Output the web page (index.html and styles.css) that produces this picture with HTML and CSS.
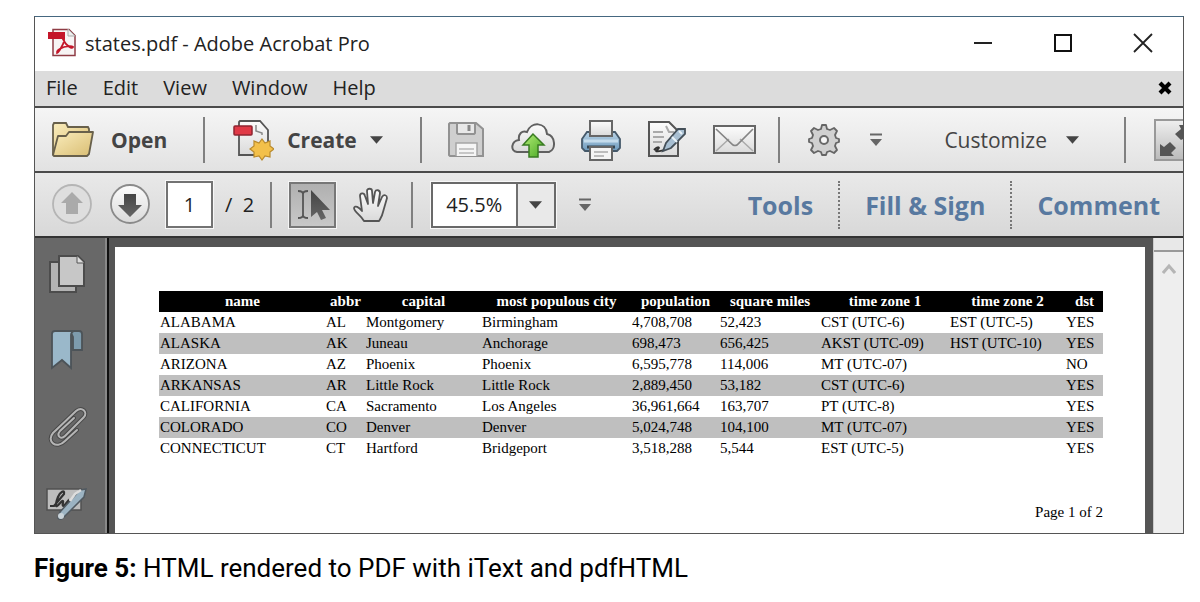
FILE: index.html
```html
<!DOCTYPE html>
<html lang="en">
<head>
<meta charset="utf-8">
<title>states.pdf - Adobe Acrobat Pro</title>
<link rel="stylesheet" href="styles.css">
</head>
<body>
<svg class="defs" aria-hidden="true">
  <defs>
    <linearGradient id="paper" x1="0" y1="0" x2="0" y2="1"><stop offset="0" stop-color="#fcfcfc"/><stop offset="1" stop-color="#dadada"/></linearGradient>
    <linearGradient id="gold" x1="0" y1="0" x2="1" y2="1"><stop offset="0" stop-color="#faedbd"/><stop offset="1" stop-color="#d9bd72"/></linearGradient>
    <linearGradient id="green" x1="0" y1="0" x2="1" y2="1"><stop offset="0" stop-color="#b5ee78"/><stop offset="1" stop-color="#48a823"/></linearGradient>
    <linearGradient id="blue" x1="0" y1="0" x2="0" y2="1"><stop offset="0" stop-color="#b9d3e6"/><stop offset="1" stop-color="#6d9abd"/></linearGradient>
    <linearGradient id="dark" x1="0" y1="0" x2="0" y2="1"><stop offset="0" stop-color="#444"/><stop offset="1" stop-color="#666"/></linearGradient>
  </defs>
</svg>
<figure class="figure">
  <div class="window">
    <header class="titlebar">
      <svg width="30" height="30" viewBox="0 0 30 30"><path d="M6 1.500h16l6 6v20H6z" fill="#f7f4f4" stroke="#8f3c45" stroke-width="1.500"/><path d="M21 1v7h7z" fill="#eee" stroke="#aaa"/><path d="M1 4h17v7H1z" fill="#c4162a"/><path d="M16 10c2 0 1 5-1 8-2 4-3 6-5 7-1-2 2-4 7-6 4-1 8-1 9 0-1 2-4 0-7-3-2-3-4-6-3-6z" fill="none" stroke="#c4162a" stroke-width="1.800"/></svg>
      <span class="title">states.pdf - Adobe Acrobat Pro</span>
      <div class="controls">
        <button aria-label="Minimize"><svg width="20" height="20" viewBox="0 0 20 20"><path d="M1 10h18" stroke="#222" stroke-width="2"/></svg></button>
        <button aria-label="Maximize"><svg width="20" height="20" viewBox="0 0 20 20"><path d="M2 2h16v16H2z" fill="none" stroke="#111" stroke-width="2"/></svg></button>
        <button aria-label="Close"><svg width="20" height="20" viewBox="0 0 20 20"><path d="M1 1l18 18M19 1L1 19" stroke="#222" stroke-width="1.800"/></svg></button>
      </div>
    </header>
    <nav class="menubar">
      <button>File</button><button>Edit</button><button>View</button><button>Window</button><button>Help</button>
      <button class="close-doc" aria-label="Close document"><svg width="14" height="14" viewBox="0 0 14 14"><path d="M2 2l10 10M12 2L2 12" stroke="#000" stroke-width="4.200"/></svg></button>
    </nav>
    <div class="toolbar main">
      <button class="open"><svg width="44" height="38" viewBox="0 0 44 38"><path d="M2 34V4l1-2h12l2 4h20l1 2v24H3z" fill="url(#gold)" stroke="#68604b" stroke-width="1.800"/><path d="M2 34L7 15h8l3-4h24l-4 22-2 2H3z" fill="url(#gold)" stroke="#68604b" stroke-width="1.800" stroke-linejoin="round"/></svg>Open</button>
      <span class="sep"></span>
      <button class="create"><svg width="41" height="42" viewBox="0 0 41 42"><path d="M6 3l1-1h20l8 9v25H6z" fill="url(#paper)" stroke="#555" stroke-width="1.800"/><path d="M23 6v6l6 2v2" fill="none" stroke="#888" stroke-width="1.500"/><rect x="1" y="7" width="18" height="9" rx="1" fill="#e03946" stroke="#8e2430" stroke-width="1.500"/><path d="M29 20l3 4 5-2v5l4 3-4 3v5l-5-1-3 4-3-4-5 1v-5l-4-3 4-3v-5l5 2z" fill="#f3c04a" stroke="#b98a2c" stroke-width="1.200"/></svg>Create<svg width="13" height="8" viewBox="0 0 14 8"><path d="M0 0h14L7 8z" fill="#444"/></svg></button>
      <span class="sep"></span>
      <div class="tools">
        <button aria-label="Save"><svg width="36" height="36" viewBox="0 0 36 36"><path d="M2 1h26l7 6v27H2l-1-1V2z" fill="#cfcfcf" stroke="#929292" stroke-width="2"/><path d="M9 2v9l1 1h16l1-1V2" fill="#e8e8e8" stroke="#929292" stroke-width="2"/><path d="M21 3v6" stroke="#888" stroke-width="3"/><path d="M8 34V21h21v13" fill="#f5f5f5" stroke="#a5a5a5" stroke-width="1.500"/><path d="M11 27h15M11 31h15" stroke="#c7c7c7" stroke-width="2"/></svg></button>
        <button aria-label="Share"><svg width="44" height="36" viewBox="0 0 44 36"><path d="M6 30C-1 29 0 19 8 18 7 12 11 8 16 10 20-1 35 0 36 12c9 2 9 16 2 18z" fill="url(#paper)" stroke="#606060" stroke-width="2"/><path d="M22 12L12 23h6v12h9V23h6z" fill="url(#green)" stroke="#397b22" stroke-width="1.500"/></svg></button>
        <button aria-label="Print"><svg width="40" height="42" viewBox="0 0 40 42"><path d="M6 13h28l5 7v9l-3 3H4l-3-3v-9z" fill="url(#blue)" stroke="#45596a" stroke-width="1.800"/><path d="M9 17V2h22v15z" fill="url(#paper)" stroke="#666" stroke-width="2"/><path d="M3 22h34" stroke="#c5dcec" stroke-width="3"/><path d="M6 28h28" stroke="#354653" stroke-width="3"/><path d="M9 28h22v13H9z" fill="#f5f5f5" stroke="#666" stroke-width="2"/><path d="M13 33h14M13 37h10" stroke="#aaa" stroke-width="1.500"/></svg></button>
        <button aria-label="Sign"><svg width="38" height="37" viewBox="0 0 38 37"><path d="M1 1h20l9 9v25H1z" fill="url(#paper)" stroke="#555" stroke-width="2"/><path d="M18 5l3 6h5M5 11h10M5 16h11M5 21h9" fill="none" stroke="#aaa" stroke-width="2"/><path d="M6 29c4-4 7-3 3 0s7 0 8 0" fill="none" stroke="#333" stroke-width="2"/><path d="M15 30l3-8L30 8h7v5L23 27z" fill="#a8bfd2" stroke="#444f58" stroke-width="1.800"/><path d="M24 16l5 5M31 10l3 3" stroke="#eaf3f9" stroke-width="2"/></svg></button>
        <button aria-label="Email"><svg width="43" height="29" viewBox="0 0 43 29"><path d="M1 1h41v27H1z" fill="url(#paper)" stroke="#666" stroke-width="2"/><path d="M3 26l13-12M40 26L27 14" stroke="#aaa" stroke-width="1.500"/><path d="M3 4l17 16q2 1 4 0L40 4" fill="none" stroke="#858585" stroke-width="1.700"/></svg></button>
      </div>
      <span class="sep"></span>
      <button class="gear" aria-label="Settings"><svg width="32" height="32" viewBox="0 0 32 32"><path d="M14 1h4l1 4 3 1 4-2 3 3-2 4 1 3 3 1v3l-3 1-1 3 2 4-3 3-4-2-3 1-1 3h-4l-1-3-3-1-4 2-3-3 2-4-1-3-3-1v-3l3-1 1-3-2-4 3-3 4 2 3-1z" fill="#d0d0d0" stroke="#656565" stroke-width="1.800" stroke-linejoin="round"/><circle cx="16" cy="16" r="4" fill="#f5f5f5" stroke="#686868" stroke-width="2"/></svg></button>
      <button aria-label="More tools"><svg width="14" height="14" viewBox="0 0 14 14"><path d="M1 1.500h12" stroke="#666" stroke-width="2"/><path d="M1 6h12l-6 7z" fill="#666"/></svg></button>
      <button class="customize push">Customize<svg width="13" height="8" viewBox="0 0 14 8"><path d="M0 0h14L7 8z" fill="#444"/></svg></button>
      <span class="sep"></span>
      <button class="expand" aria-label="Full screen"><svg width="27" height="38" viewBox="0 0 27 38"><path d="M4 35V23l4 3 6-5 6 6-5 5 3 3zM27 4h-4l2 4-6 5 6 6 2-1z" fill="#555"/></svg></button>
    </div>
    <div class="toolbar nav">
      <button aria-label="Previous page"><svg width="42" height="42" viewBox="0 0 42 42"><circle cx="21" cy="20" r="19" fill="#dedede" stroke="#b5b5b5" stroke-width="1.800"/><path d="M21 8l11 11h-5v11H15V19h-5z" fill="#aaa"/></svg></button>
      <button class="next" aria-label="Next page"><svg width="42" height="42" viewBox="0 0 42 42"><circle cx="21" cy="20" r="19" fill="url(#paper)" stroke="#8a8a8a" stroke-width="1.800"/><path d="M15 10h12v11h6L21 33 9 21h6z" fill="url(#dark)"/></svg></button>
      <input class="page-number" type="text" value="1" aria-label="Page number">
      <span class="total">/&nbsp; 2</span>
      <span class="sep"></span>
      <button class="selection" aria-label="Selection tool"><svg width="40" height="36" viewBox="0 0 40 36"><path d="M5 4q5 0 5 3 0-3 5-3M10 7v22M5 31q5 0 5-3 0 3 5 3" fill="none" stroke="#555" stroke-width="1.800"/><path d="M18 3v27l6-5 4 8 5-2-4-8h8z" fill="url(#dark)"/></svg></button>
      <button class="hand" aria-label="Hand tool"><svg width="36" height="36" viewBox="0 0 36 36"><path d="M11 34C8 28 1 25 1 21c1-3 5-1 8 3L7 9c0-3 4-4 5 0l3 8-1-13c0-3 5-3 5 0l1 12 2-11c1-3 5-2 5 1l-2 13 4-9c2-3 5-2 5 1l-4 14c-1 5-3 7-4 9z" fill="url(#paper)" stroke="#555" stroke-width="1.800" stroke-linejoin="round"/></svg></button>
      <span class="sep"></span>
      <div class="zoom">
        <select aria-label="Zoom level"><option>45.5%</option></select>
        <svg width="13" height="8" viewBox="0 0 14 8"><path d="M0 0h14L7 8z" fill="#444"/></svg>
      </div>
      <button aria-label="More view tools"><svg width="14" height="14" viewBox="0 0 14 14"><path d="M1 1.500h12" stroke="#666" stroke-width="2"/><path d="M1 6h12l-6 7z" fill="#666"/></svg></button>
      <div class="panels push"><button>Tools</button><button>Fill &amp; Sign</button><button>Comment</button></div>
    </div>
    <div class="workspace">
      <aside class="sidebar">
        <button aria-label="Page thumbnails"><svg width="38" height="40" viewBox="0 0 38 40"><path d="M2 8h26v30H2z" fill="#b3b3b3" stroke="#4c4c4c" stroke-width="2"/><path d="M11 2h19l6 6v24H11z" fill="#c7c7c7" stroke="#4c4c4c" stroke-width="2"/><path d="M29 2v7h7" fill="#ddd" stroke="#555"/></svg></button>
        <button aria-label="Bookmarks"><svg width="38" height="42" viewBox="0 0 38 42"><path d="M22 2h9q3 0 3 3v16h-9V8z" fill="#7d9bad" stroke="#4c5358" stroke-width="1.800"/><path d="M4 39V5q0-3 3-3h19q-3 1-3 4v33l-9-8z" fill="#9ab8ca" stroke="#4c5358" stroke-width="1.800"/></svg></button>
        <button aria-label="Attachments"><svg width="42" height="46" viewBox="0 0 42 46"><g fill="none" stroke-linecap="round"><path d="M31 24L19 35c-9 9-19 0-12-8L30 5c6-5 12 1 8 6L19 30c-4 4-9 0-5-5l14-13" stroke="#484848" stroke-width="4"/><path d="M31 24L19 35c-9 9-19 0-12-8L30 5c6-5 12 1 8 6L19 30c-4 4-9 0-5-5l14-13" stroke="#b5b5b5" stroke-width="2"/></g></svg></button>
        <button aria-label="Signatures"><svg width="42" height="34" viewBox="0 0 42 34"><path d="M1 2h34v21H1z" fill="#bdbdbd" stroke="#505050" stroke-width="1.500"/><path d="M4 19h4L18 7c1-5-4-2-6 3s-3 10-1 9 5-6 6-5-2 5 1 5l4-5 1 5" fill="none" stroke="#333" stroke-width="2.200"/><path d="M12 31l2-6L34 3l6-1-2 8-20 20q-4 4-6 1z" fill="#9cb3c2" stroke="#505960" stroke-width="1.500"/><path d="M24 14l5-7 6-4" fill="none" stroke="#ddd" stroke-width="2.500"/><circle cx="15" cy="29" r="3" fill="#c9d3d9"/></svg></button>
      </aside>
      <main class="page">
        <table>
          <colgroup><col class="c-name"><col class="c-abbr"><col class="c-capital"><col class="c-city"><col class="c-pop"><col class="c-miles"><col class="c-zone1"><col class="c-zone2"><col class="c-dst"></colgroup>
          <thead><tr><th>name</th><th>abbr</th><th>capital</th><th>most populous city</th><th>population</th><th>square miles</th><th>time zone 1</th><th>time zone 2</th><th>dst</th></tr></thead>
          <tbody>
            <tr><td>ALABAMA</td><td>AL</td><td>Montgomery</td><td>Birmingham</td><td>4,708,708</td><td>52,423</td><td>CST (UTC-6)</td><td>EST (UTC-5)</td><td>YES</td></tr>
            <tr><td>ALASKA</td><td>AK</td><td>Juneau</td><td>Anchorage</td><td>698,473</td><td>656,425</td><td>AKST (UTC-09)</td><td>HST (UTC-10)</td><td>YES</td></tr>
            <tr><td>ARIZONA</td><td>AZ</td><td>Phoenix</td><td>Phoenix</td><td>6,595,778</td><td>114,006</td><td>MT (UTC-07)</td><td></td><td>NO</td></tr>
            <tr><td>ARKANSAS</td><td>AR</td><td>Little Rock</td><td>Little Rock</td><td>2,889,450</td><td>53,182</td><td>CST (UTC-6)</td><td></td><td>YES</td></tr>
            <tr><td>CALIFORNIA</td><td>CA</td><td>Sacramento</td><td>Los Angeles</td><td>36,961,664</td><td>163,707</td><td>PT (UTC-8)</td><td></td><td>YES</td></tr>
            <tr><td>COLORADO</td><td>CO</td><td>Denver</td><td>Denver</td><td>5,024,748</td><td>104,100</td><td>MT (UTC-07)</td><td></td><td>YES</td></tr>
            <tr><td>CONNECTICUT</td><td>CT</td><td>Hartford</td><td>Bridgeport</td><td>3,518,288</td><td>5,544</td><td>EST (UTC-5)</td><td></td><td>YES</td></tr>
          </tbody>
        </table>
        <p class="page-count">Page 1 of 2</p>
      </main>
      <div class="scrollbar">
        <div class="split"></div>
        <button aria-label="Scroll up"><svg width="14" height="12" viewBox="0 0 14 12"><path d="M1 10l6-7 6 7" fill="none" stroke="#b5b5b5" stroke-width="3"/></svg></button>
      </div>
    </div>
  </div>
  <figcaption><b>Figure 5:</b> HTML rendered to PDF with iText and pdfHTML</figcaption>
</figure>
</body>
</html>
```
FILE: styles.css
```css
* { box-sizing: border-box; }
body { margin: 0; background: #fff; font-family: "Open Sans", "Noto Sans", sans-serif; font-size: 20px; color: #222; }
svg { display: block; flex: none; }
.defs { position: absolute; width: 0; height: 0; }
button { border: 0; padding: 0; margin: 0; background: none; font: inherit; color: inherit; display: flex; align-items: center; flex: none; white-space: nowrap; }
.figure { margin: 16px 16px 0 34px; }
.window { border: 1px solid #555; border-top-color: #456780; overflow: hidden; }
.titlebar { display: flex; align-items: center; height: 54px; padding: 0 30px 2px 12px; background: #fff; }
.title { margin-left: 8px; }
.controls { display: flex; gap: 60px; margin-left: auto; }
.menubar { display: flex; align-items: center; gap: 25px; height: 35px; padding: 0 11px 2px; background: #dcdcdc; }
.close-doc { margin-left: auto; }
.toolbar { display: flex; align-items: center; height: 65px; border-top: 2px solid #4b4b4b; padding-left: 16px; background: linear-gradient(#f5f5f5, #e2e2e2); }
.toolbar.nav { background: linear-gradient(#e9e9e9, #d8d8d8); }
.push { margin-left: auto; }
.sep { flex: none; width: 2px; height: 46px; background: #808080; }
.open, .create { font-size: 21px; font-weight: 700; color: #444; }
.open { gap: 16px; margin-right: 36px; }
.create { gap: 13px; margin: 0 37px 0 28px; }
.tools { display: flex; align-items: center; justify-content: space-between; width: 308px; margin: 0 22px 0 26px; }
.gear { margin: 0 29px 0 28px; }
.customize { gap: 19px; margin-right: 45px; font-size: 21px; color: #444; }
.expand { margin-left: 28px; height: 42px; border: 2px solid #999; border-right: 0; background: linear-gradient(#eee, #bbb); }
.next { margin: 0 15px 0 16px; }
.page-number { width: 47px; height: 47px; flex: none; border: 2px solid #737373; outline: 1px solid #f7f7f7; border-radius: 0; background: #fff; text-align: center; font: inherit; color: #222; padding: 0; }
.total { margin: 0 16px 0 12px; white-space: nowrap; }
.selection { margin: 0 17px; width: 47px; height: 46px; justify-content: center; border: 2px solid #777; outline: 1px solid #f5f5f5; background: linear-gradient(#b0b0b0, #c8c8c8); }
.hand { margin-right: 22px; }
.zoom { display: grid; grid-template-columns: 84px 37px; align-items: center; width: 125px; height: 46px; flex: none; margin: 0 22px 0 18px; border: 2px solid #696969; outline: 1px solid #f7f7f7; background: #fff; }
.zoom select { grid-area: 1 / 1 / 2 / 3; align-self: stretch; appearance: none; border: 0; border-radius: 0; padding: 0 0 0 13px; font: inherit; color: #222; background: linear-gradient(90deg, #fff 83px, #707070 83px, #707070 85px, #e9e9e9 85px); }
.zoom svg { grid-area: 1 / 2; justify-self: center; pointer-events: none; }
.panels { display: flex; padding-right: 23px; font-size: 25px; font-weight: 700; color: #5879a0; }
.panels button { height: 48px; }
.panels button + button { margin-left: 25px; padding-left: 25px; border-left: 2px dotted #777; }
.workspace { display: flex; border-top: 2px solid #333; background: #555; }
.sidebar { flex: none; width: 74px; padding: 16px 20px 12px 12px; border-right: 2px solid #111; display: flex; flex-direction: column; align-items: center; justify-content: space-between; background: #686868; box-shadow: inset -2px 0 #888; }
.page { flex: 1; min-width: 0; margin: 9px 8px 0 6px; padding: 44px 42px 10px 44px; background: #fff; color: #000; font-family: "Liberation Serif", serif; font-size: 15px; line-height: 21px; }
table { width: 100%; table-layout: fixed; border-collapse: collapse; }
th, td { padding: 0 0 0 1px; height: 21px; white-space: nowrap; text-align: left; }
th { text-align: center; background: #000; color: #fff; }
tbody tr:nth-child(even) { background: #bfbfbf; }
.c-name { width: 166px; }
.c-abbr { width: 40px; }
.c-capital { width: 116px; }
.c-city { width: 150px; }
.c-pop { width: 88px; }
.c-miles { width: 101px; }
.c-zone1 { width: 129px; }
.c-zone2 { width: 116px; }
.c-dst { width: 38px; }
.page-count { margin: 43px 0 0; text-align: right; }
.scrollbar { flex: none; width: 30px; background: #eee; display: flex; flex-direction: column; align-items: center; border-left: 1px solid #ccc; }
.split { align-self: stretch; height: 14px; margin-bottom: 11px; border-bottom: 2px solid #999; background: #e8e8e8; }
figcaption { margin-top: 18px; font-family: Roboto, Inter, sans-serif; font-size: 26px; line-height: 32px; color: #000; }
```
